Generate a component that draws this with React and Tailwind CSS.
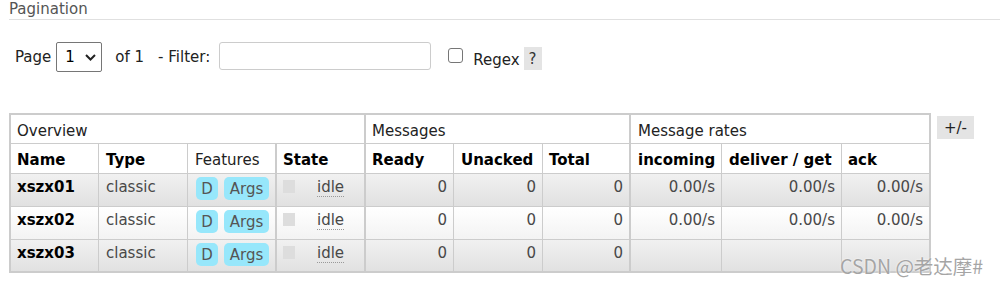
import { useState } from "react";

const queues = [
  { name: "xszx01", type: "classic", rates: true },
  { name: "xszx02", type: "classic", rates: true },
  { name: "xszx03", type: "classic", rates: false },
];

const cellBorder = {
  thin: "border-r border-[#cccccc]",
  thick: "border-r-2 border-[#cccccc]",
  none: "",
};

function Badge({ children, className }) {
  return (
    <span
      className={
        "inline-block h-[23px] rounded-[5px] bg-[#97e7fb] pt-[3px] text-center leading-[18px] text-[#555] " +
        className
      }
    >
      {children}
    </span>
  );
}

function DataCell({ edge, shade, last, right, children, className = "" }) {
  return (
    <div
      className={[
        cellBorder[edge],
        last ? "" : "border-b border-[#cccccc]",
        shade
          ? "bg-linear-to-b from-[#f1f1f1] to-[#e1e1e1]"
          : "bg-linear-to-b from-white to-[#f3f3f3]",
        right ? "pr-[6px] text-right" : "pl-[6px]",
        "leading-[18px] text-[#484848]",
        className,
      ].join(" ")}
    >
      {children}
    </div>
  );
}

function QueueRow({ q, index }) {
  const shade = index % 2 === 0;
  const last = index === queues.length - 1;
  const rate = q.rates ? "0.00/s" : "";
  return (
    <>
      <DataCell edge="thin" shade={shade} last={last} className="pt-[4px] font-bold text-black">
        {q.name}
      </DataCell>
      <DataCell edge="thin" shade={shade} last={last} className="pl-[7px] pt-[4px]">
        {q.type}
      </DataCell>
      <DataCell edge="thick" shade={shade} last={last} className="pl-[8px] pt-[3px]">
        <div className="flex gap-[6px]">
          <Badge className="w-[22px]">D</Badge>
          <Badge className="w-[45px]">Args</Badge>
        </div>
      </DataCell>
      <DataCell edge="thick" shade={shade} last={last} className="pt-[6px]">
        <div className="flex items-start">
          <span className="h-[13px] w-[12px] bg-[#dddddd]" />
          <span className="-mt-[2px] ml-[22px] border-b border-dotted border-[#999] leading-[18px] text-[#484848]">
            idle
          </span>
        </div>
      </DataCell>
      <DataCell edge="thin" shade={shade} last={last} right className="pt-[4px]">0</DataCell>
      <DataCell edge="thin" shade={shade} last={last} right className="pt-[4px]">0</DataCell>
      <DataCell edge="thick" shade={shade} last={last} right className="pt-[4px]">0</DataCell>
      <DataCell edge="thin" shade={shade} last={last} right className="pt-[4px]">{rate}</DataCell>
      <DataCell edge="thin" shade={shade} last={last} right className="pt-[4px]">{rate}</DataCell>
      <DataCell edge="none" shade={shade} last={last} right className="pt-[4px]">{rate}</DataCell>
    </>
  );
}

function QueueTable() {
  const head = [
    ["Name", "thin", "font-bold text-black"],
    ["Type", "thin", "pl-[7px] font-bold text-black"],
    ["Features", "thick", "pl-[7px] text-[#222]"],
    ["State", "thick", "font-bold text-black"],
    ["Ready", "thin", "font-bold text-black"],
    ["Unacked", "thin", "pl-[7px] font-bold text-black"],
    ["Total", "thick", "font-bold text-black"],
    ["incoming", "thin", "pl-[7px] font-bold text-black"],
    ["deliver / get", "thin", "pl-[7px] font-bold text-black"],
    ["ack", "none", "font-bold text-black"],
  ];

  return (
    <div className="grid w-[922px] grid-cols-[88px_89px_89px_89px_88px_89px_88px_91px_120px_87px] grid-rows-[29px_30px_33px_33px_31px] border-2 border-[#cccccc] bg-white">
      <div className="col-span-4 border-r-2 border-b border-[#cccccc] pl-[6px] pt-[7px] leading-[18px] text-[#222]">
        Overview
      </div>
      <div className="col-span-3 border-r-2 border-b border-[#cccccc] pl-[6px] pt-[7px] leading-[18px] text-[#222]">
        Messages
      </div>
      <div className="col-span-3 border-b border-[#cccccc] pl-[7px] pt-[7px] leading-[18px] text-[#222]">
        Message rates
      </div>

      {head.map(([label, edge, extra]) => (
        <div
          key={label}
          className={`${cellBorder[edge]} border-b border-[#cccccc] pl-[6px] pt-[7px] leading-[18px] ${extra}`}
        >
          {label}
        </div>
      ))}

      {queues.map((q, i) => (
        <QueueRow key={q.name} q={q} index={i} />
      ))}
    </div>
  );
}

export default function App() {
  const [page, setPage] = useState("1");
  const [filter, setFilter] = useState("");
  const [regex, setRegex] = useState(false);

  return (
    <div className="relative h-[287px] w-[1000px] overflow-hidden bg-white font-['DejaVu_Sans',Verdana,sans-serif] text-[15px] text-[#222]">
      <h3 className="ml-[9px] h-[20px] border-b border-[#e0e0e0] leading-[18px] text-[#555]">
        Pagination
      </h3>

      <div className="mt-[22px] flex items-start leading-[18px]">
        <span className="ml-[15px] mt-[6px]">Page</span>
        <div className="relative ml-[5px] h-[30px] w-[46px]">
          <select
            value={page}
            onChange={(e) => setPage(e.target.value)}
            className="h-full w-full appearance-none rounded-[2px] border border-[#767676] bg-white pl-[8px] text-[15px] text-black outline-none"
          >
            <option value="1">1</option>
          </select>
          <svg
            className="pointer-events-none absolute left-[29px] top-[12px]"
            width="11"
            height="7"
            viewBox="0 0 11 7"
          >
            <path d="M1 1l4.5 4.5L10 1" fill="none" stroke="#222" strokeWidth="2" />
          </svg>
        </div>
        <span className="ml-[13px] mt-[6px]">of 1</span>
        <span className="ml-[14px] mt-[6px]">- Filter:</span>
        <input
          value={filter}
          onChange={(e) => setFilter(e.target.value)}
          className="ml-[9px] h-[28px] w-[212px] rounded-[3px] border border-[#cccccc] outline-none"
        />
        <input
          type="checkbox"
          checked={regex}
          onChange={(e) => setRegex(e.target.checked)}
          className="ml-[17px] mt-[6px] h-[15px] w-[15px] appearance-none rounded-[3px] border border-[#767676] bg-white"
        />
        <span className="ml-[10px] mt-[9px]">Regex</span>
        <span className="ml-[4px] mt-[5px] h-[23px] w-[18px] bg-[#e4e4e4] pt-[3px] text-center text-[#333]">
          ?
        </span>
      </div>

      <div className="mt-[41px] flex items-start">
        <div className="ml-[9px]">
          <QueueTable />
        </div>
        <button className="ml-[6px] mt-[3px] h-[23px] w-[37px] bg-[#e4e4e4] leading-[18px] text-[#222]">
          +/-
        </button>
      </div>

      <div className="absolute left-[840px] top-[252px] font-['Noto_Sans_CJK_SC',sans-serif] text-[19.5px] leading-[28px] text-[#a5a5a5] [text-shadow:0_0_2px_#fff]">
        CSDN @老达摩#
      </div>
    </div>
  );
}
